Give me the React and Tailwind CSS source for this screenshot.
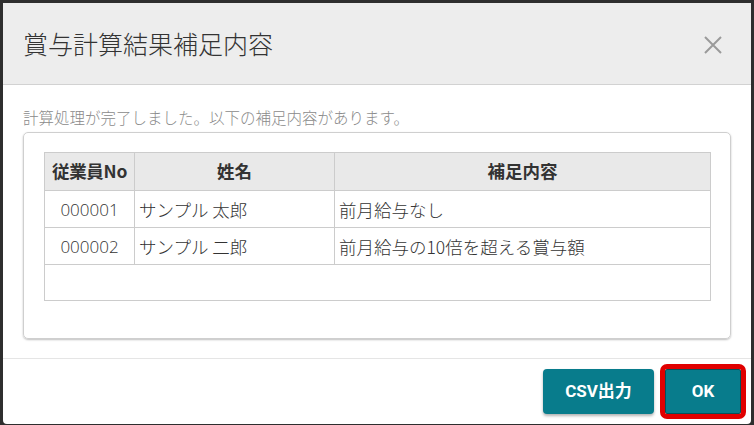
export default function App() {
  const rows = [
    { no: "000001", name: "サンプル 太郎", note: "前月給与なし" },
    { no: "000002", name: "サンプル 二郎", note: "前月給与の10倍を超える賞与額" },
  ];
  const font = { fontFamily: '"Noto Sans CJK JP", "Noto Sans", sans-serif' };
  return (
    <div className="w-[754px] h-[425px] bg-[#2e2e2e] pl-[3px] pt-[3px] overflow-hidden" style={font}>
      <div className="w-[748px] h-[421px] bg-white rounded-b-[4px] flex flex-col overflow-hidden">
        <div className="h-[82px] shrink-0 bg-[#ededed] border-b border-[#d2d2d2] flex items-center justify-between pl-[20px] pr-[29px]">
          <div className="text-[25px] leading-none text-[#333] font-light">賞与計算結果補足内容</div>
          <svg width="18" height="18" viewBox="0 0 18 18" className="mt-[2px]">
            <path d="M1 1 L17 17 M17 1 L1 17" stroke="#9a9a9a" strokeWidth="2" fill="none" />
          </svg>
        </div>
        <div className="flex-1 px-[20px] pt-[25px]">
          <div className="text-[15.5px] leading-none text-[#8a8a8a] font-light">計算処理が完了しました。以下の補足内容があります。</div>
          <div className="mt-[6px] h-[207px] border border-[#cfcfcf] rounded-[5px] shadow-[0_1px_2px_rgba(0,0,0,0.25)] px-[20px] pt-[19px]">
            <table className="w-[667px] border-collapse table-fixed text-[17.5px] text-[#333]">
              <colgroup>
                <col className="w-[90px]" />
                <col className="w-[200px]" />
                <col />
              </colgroup>
              <thead>
                <tr className="h-[38px] bg-[#e9e9e9]">
                  <th className="border border-[#cccccc] font-bold text-center px-[2px] tracking-[-0.3px]">従業員No</th>
                  <th className="border border-[#cccccc] font-bold text-center">姓名</th>
                  <th className="border border-[#cccccc] font-bold text-center">補足内容</th>
                </tr>
              </thead>
              <tbody>
                {rows.map((r) => (
                  <tr key={r.no} className="h-[37px]">
                    <td className="border border-[#cccccc] text-center font-light text-[17px] pt-[3px]" style={{ fontFamily: '"Open Sans", "Noto Sans", sans-serif' }}>{r.no}</td>
                    <td className="border border-[#cccccc] pl-[4px] font-light pt-[3px]">{r.name}</td>
                    <td className="border border-[#cccccc] pl-[4px] font-light pt-[3px]">{r.note}</td>
                  </tr>
                ))}
                <tr className="h-[36px]">
                  <td className="border-l border-b border-[#cccccc]" />
                  <td className="border-b border-[#cccccc]" />
                  <td className="border-r border-b border-[#cccccc]" />
                </tr>
              </tbody>
            </table>
          </div>
        </div>
        <div className="h-[66px] shrink-0 border-t border-[#e5e5e5] flex items-start justify-end pt-[10px] pr-[10px] gap-[11px]">
          <button className="w-[111px] h-[45px] rounded-[4px] bg-[#087c8c] text-white text-[17px] font-bold shadow-[0_2px_3px_rgba(0,0,0,0.3)]" style={{ fontFamily: 'Roboto, "Noto Sans CJK JP", sans-serif' }}>
            CSV出力
          </button>
          <button className="w-[76px] h-[45px] rounded-[2px] bg-[#087c8c] text-white text-[17px] font-bold border border-[#05505a] outline-[5px] outline-solid outline-[#e00000] outline-offset-0" style={{ fontFamily: 'Roboto, sans-serif' }}>
            OK
          </button>
        </div>
      </div>
    </div>
  );
}
